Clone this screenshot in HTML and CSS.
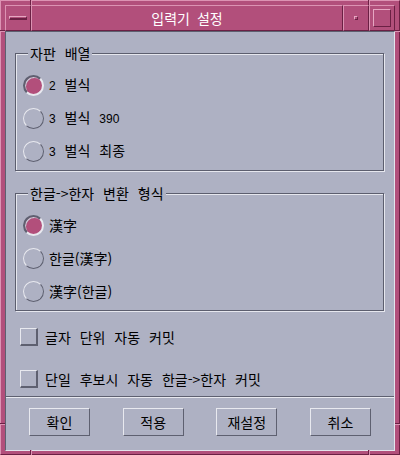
FILE: index.html
```html
<!DOCTYPE html>
<html lang="ko">
<head>
<meta charset="utf-8">
<title>입력기 설정</title>
<link rel="stylesheet" href="styles.css">
</head>
<body>
<div class="window">
  <span class="mark mark-v mark-top mark-left"></span>
  <span class="mark mark-v mark-top mark-right"></span>
  <span class="mark mark-v mark-bottom mark-left"></span>
  <span class="mark mark-v mark-bottom mark-right"></span>
  <span class="mark mark-h mark-side-l mark-upper"></span>
  <span class="mark mark-h mark-side-r mark-upper"></span>
  <span class="mark mark-h mark-side-l mark-lower"></span>
  <span class="mark mark-h mark-side-r mark-lower"></span>

  <div class="titlebar">
    <div class="tb-btn menu-btn"><span class="menu-bar"></span></div>
    <div class="title">입력기 설정</div>
    <div class="tb-btn min-btn"><span class="min-dot"></span></div>
    <div class="tb-btn max-btn"><span class="max-box"></span></div>
  </div>

  <div class="content">
    <div class="main">
      <div class="group">
        <div class="legend">자판 배열</div>
        <div class="options">
          <div class="opt"><span class="radio on"></span><span class="label"><span class="num">2</span> 벌식</span></div>
          <div class="opt"><span class="radio"></span><span class="label"><span class="num">3</span> 벌식 <span class="num">390</span></span></div>
          <div class="opt"><span class="radio"></span><span class="label"><span class="num">3</span> 벌식 최종</span></div>
        </div>
      </div>

      <div class="group group-second">
        <div class="legend">한글-&gt;한자 변환 형식</div>
        <div class="options">
          <div class="opt"><span class="radio on"></span><span class="label">漢字</span></div>
          <div class="opt"><span class="radio"></span><span class="label">한글(漢字)</span></div>
          <div class="opt"><span class="radio"></span><span class="label">漢字(한글)</span></div>
        </div>
      </div>

      <div class="check-row check-first"><span class="checkbox"></span><span class="label">글자 단위 자동 커밋</span></div>
      <div class="check-row check-second"><span class="checkbox"></span><span class="label">단일 후보시 자동 한글-&gt;한자 커밋</span></div>
    </div>

    <div class="sep"></div>

    <div class="buttons">
      <div class="btn">확인</div>
      <div class="btn">적용</div>
      <div class="btn">재설정</div>
      <div class="btn">취소</div>
    </div>
  </div>
</div>
</body>
</html>
```

FILE: styles.css
```css
html, body {
  margin: 0;
  padding: 0;
  background: #b24f7b;
}

.window {
  position: relative;
  width: 400px;
  height: 455px;
  box-sizing: border-box;
  background: #b24f7b;
  border-top: 1px solid #dc93b3;
  border-left: 1px solid #dc93b3;
  border-right: 1px solid #6b2044;
  border-bottom: 1px solid #6b2044;
  padding: 4px 4px 3px 4px;
  display: flex;
  flex-direction: column;
  font-family: "Noto Sans CJK KR", "Noto Sans", sans-serif;
  font-size: 14px;
  color: #000;
}

/* frame resize-corner marks */
.mark {
  position: absolute;
  display: block;
}
.mark-v {
  width: 0;
  height: 5px;
  border-left: 1px solid #6b2044;
  border-right: 1px solid #dc93b3;
}
.mark-h {
  height: 0;
  width: 5px;
  border-top: 1px solid #6b2044;
  border-bottom: 1px solid #dc93b3;
}
.mark-top { top: -1px; }
.mark-bottom { bottom: -1px; }
.mark-left { left: 29px; }
.mark-right { left: 367px; }
.mark-side-l { left: -1px; }
.mark-side-r { right: -1px; }
.mark-upper { top: 29px; }
.mark-lower { top: 422px; }

/* title bar */
.titlebar {
  display: flex;
  height: 26px;
  flex: none;
}
.tb-btn {
  width: 26px;
  height: 26px;
  box-sizing: border-box;
  border-top: 1px solid #dc93b3;
  border-left: 1px solid #dc93b3;
  border-right: 1px solid #6b2044;
  border-bottom: 1px solid #6b2044;
  display: flex;
  align-items: center;
  justify-content: center;
  flex: none;
}
.menu-bar {
  display: block;
  width: 18px;
  height: 4px;
  box-sizing: border-box;
  border-top: 1px solid #e6a7c2;
  border-left: 1px solid #e6a7c2;
  border-bottom: 2px solid #6b2044;
  border-right: 1px solid #6b2044;
  background: #b24f7b;
}
.min-dot {
  display: block;
  width: 4px;
  height: 4px;
  box-sizing: border-box;
  border-top: 1px solid #e6a7c2;
  border-left: 1px solid #e6a7c2;
  border-bottom: 1px solid #6b2044;
  border-right: 1px solid #6b2044;
  background: #b24f7b;
}
.max-box {
  display: block;
  width: 18px;
  height: 18px;
  box-sizing: border-box;
  border-top: 1px solid #e6a7c2;
  border-left: 1px solid #e6a7c2;
  border-bottom: 1px solid #6b2044;
  border-right: 1px solid #6b2044;
}
.title {
  flex: 1;
  box-sizing: border-box;
  border-top: 1px solid #dc93b3;
  border-left: 1px solid #dc93b3;
  border-right: 1px solid #6b2044;
  border-bottom: 1px solid #6b2044;
  color: #ffffff;
  text-align: center;
  line-height: 24px;
  word-spacing: 3px;
}

/* main content */
.content {
  flex: 1;
  display: flex;
  flex-direction: column;
  background: #aeb1c3;
  border-top: 1px solid #5e6070;
  border-left: 1px solid #5e6070;
  border-right: 1px solid #e3e4ec;
  border-bottom: 1px solid #e3e4ec;
}
.main {
  padding: 21px 10px 0 9px;
  display: flex;
  flex-direction: column;
}
.group {
  display: flex;
  flex-direction: column;
  border: 1px solid #5c5e6e;
  box-shadow: inset 1px 1px 0 #e6e7ee, 1px 1px 0 #e6e7ee;
}
.group-second {
  margin-top: 22px;
}
.legend {
  align-self: flex-start;
  margin: -9px 0 0 12px;
  padding: 0 2px;
  line-height: 17px;
  background: #aeb1c3;
  word-spacing: 5px;
}
.options {
  padding: 7px 0 2px 0;
}
.opt {
  display: flex;
  align-items: center;
  height: 33px;
  padding-left: 7px;
  gap: 5px;
}
.label {
  word-spacing: 5px;
  line-height: 17px;
}
.num {
  font-family: "Liberation Sans", "DejaVu Sans", sans-serif;
  font-size: 12px;
}
.radio {
  display: block;
  width: 21px;
  height: 21px;
  box-sizing: border-box;
  border-radius: 50%;
  border: 1px solid;
  border-color: #e8e9ef #5e6070 #5e6070 #e8e9ef;
  flex: none;
}
.radio.on {
  border-width: 2px;
  border-color: #5e6070 #e8e9ef #e8e9ef #5e6070;
  background: #b24f7b;
  box-shadow: inset 1px 1px 0 #c9cad6;
}

.check-row {
  display: flex;
  align-items: center;
  height: 18px;
  padding-left: 5px;
  gap: 7px;
}
.check-first { margin-top: 17px; }
.check-second { margin-top: 24px; }
.checkbox {
  display: block;
  width: 18px;
  height: 18px;
  box-sizing: border-box;
  border-top: 1px solid #e8e9ef;
  border-left: 1px solid #e8e9ef;
  border-right: 2px solid #5e6070;
  border-bottom: 2px solid #5e6070;
  flex: none;
}

.sep {
  margin-top: 8px;
  border-top: 1px solid #5e6070;
  border-bottom: 1px solid #e8e9ef;
}

.buttons {
  margin-top: 10px;
  padding: 0 23px;
  display: flex;
  justify-content: space-between;
}
.btn {
  width: 61px;
  height: 28px;
  box-sizing: border-box;
  border-top: 1px solid #e8e9ef;
  border-left: 1px solid #e8e9ef;
  border-right: 1px solid #5e6070;
  border-bottom: 1px solid #5e6070;
  display: flex;
  align-items: center;
  justify-content: center;
  line-height: 17px;
}
```
